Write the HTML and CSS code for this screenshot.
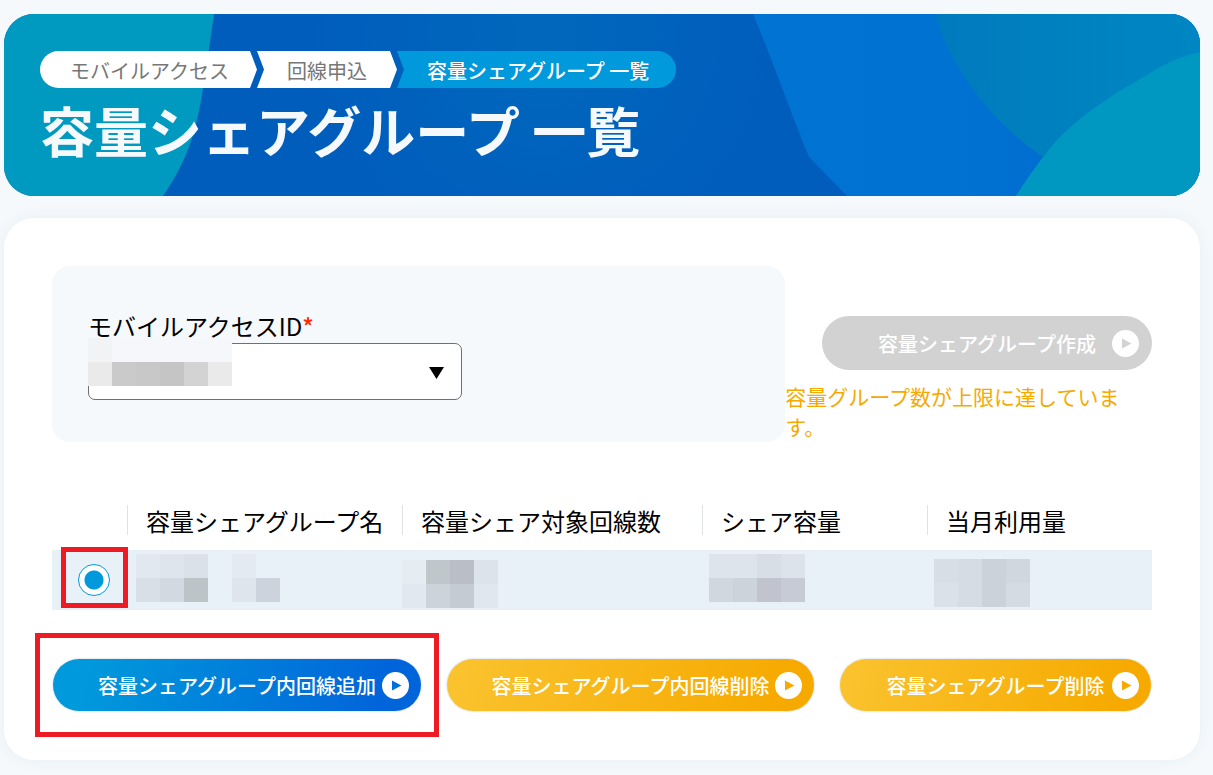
FILE: index.html
```html
<!DOCTYPE html>
<html lang="ja">
<head>
<meta charset="utf-8">
<meta name="viewport" content="width=device-width, initial-scale=1">
<title>容量シェアグループ 一覧</title>
<link rel="stylesheet" href="styles.css">
</head>
<body>
<div class="page">
  <header class="hero">
    <svg class="hero-art" viewBox="0 0 1196 182" preserveAspectRatio="none" aria-hidden="true">
      <defs>
        <radialGradient id="base" gradientUnits="userSpaceOnUse" cx="540" cy="20" r="230">
          <stop offset="0" stop-color="#0068bc"/><stop offset="1" stop-color="#005dbc"/>
        </radialGradient>
        <linearGradient id="sky" x1="0" y1="0" x2="1" y2="0">
          <stop offset="0" stop-color="#0074d3"/><stop offset="0.45" stop-color="#0072d2"/><stop offset="0.7" stop-color="#006dd0"/>
        </linearGradient>
        <linearGradient id="sea" x1="0" y1="0" x2="1" y2="0">
          <stop offset="0" stop-color="#007abf"/><stop offset="0.35" stop-color="#0080be"/><stop offset="1" stop-color="#0086c4"/>
        </linearGradient>
      </defs>
      <rect width="1196" height="182" fill="url(#base)"/>
      <path d="M0 0H210C206 28 203 50 199 74C193 115 184 146 159 182H0Z" fill="#0099c0"/>
      <path d="M749 0C768 45 783 88 802 136Q804 142 808 146L843 182H1196V0Z" fill="url(#sky)"/>
      <path d="M931 0C945 50 985 107 1039 143L1196 150V0Z" fill="url(#sea)"/>
      <path d="M1012 182C1027 158 1040 141 1053 126C1082 97 1108 81 1143 61C1158 51 1175 43 1196 38V182Z" fill="#0097c0"/>
    </svg>
    <nav class="crumbs" aria-label="パンくずリスト">
      <a class="crumb crumb-first" href="#">モバイルアクセス</a>
      <a class="crumb crumb-mid" href="#">回線申込</a>
      <span class="crumb crumb-last" aria-current="page">容量シェアグループ 一覧</span>
    </nav>
    <h1 class="title">容量シェアグループ 一覧</h1>
  </header>

  <main class="card">
    <div class="top">
      <section class="panel">
        <label class="label" for="access-id">モバイルアクセスID<span class="required">*</span></label>
        <div class="select-wrap">
          <select class="select" id="access-id"><option></option></select>
          <svg class="caret" viewBox="0 0 16 12" aria-hidden="true"><path d="M0 0H15L7.500 12Z"/></svg>
          <svg class="mask" viewBox="0 0 144 48" shape-rendering="crispEdges" aria-hidden="true">
            <path fill="#f6f7fa" d="M24 0h120v24H24z"/><path fill="#f2f3f5" d="M0 0h24v24H0z"/>
            <path fill="#eaeaea" d="M0 24h24v24H0zM120 24h24v24h-24z"/><path fill="#cacaca" d="M24 24h24v24H24z"/>
            <path fill="#c8c8c8" d="M48 24h24v24H48z"/><path fill="#c5c5c5" d="M72 24h24v24H72z"/><path fill="#d3d3d3" d="M96 24h24v24H96z"/>
          </svg>
        </div>
      </section>
      <section class="create">
        <button class="button button-create" type="button" disabled>容量シェアグループ作成
          <svg class="play" viewBox="0 0 27 27" aria-hidden="true"><circle cx="13.500" cy="13.500" r="13.500"/><path d="M10 8.500L19.500 13.500L10 18.500Z"/></svg>
        </button>
        <p class="notice">容量グループ数が上限に達しています。</p>
      </section>
    </div>

    <table class="groups">
      <colgroup><col class="col-pick"><col class="col-name"><col class="col-lines"><col class="col-size"><col class="col-size"></colgroup>
      <thead>
        <tr>
          <td></td>
          <th scope="col"><span class="head">容量シェアグループ名</span></th>
          <th scope="col"><span class="head">容量シェア対象回線数</span></th>
          <th scope="col"><span class="head">シェア容量</span></th>
          <th scope="col"><span class="head">当月利用量</span></th>
        </tr>
      </thead>
      <tbody>
        <tr class="row">
          <td class="pick"><input class="radio" type="radio" name="group" aria-label="グループを選択" checked><span class="mark mark-radio"></span></td>
          <td><svg class="mosaic" viewBox="0 0 200 60" shape-rendering="crispEdges" aria-hidden="true">
            <path fill="#e2e8ef" d="M9 4h24v24H9z"/><path fill="#dfe5ec" d="M33 4h24v24H33z"/><path fill="#dae1e8" d="M57 4h24v24H57z"/>
            <path fill="#d9dfe7" d="M9 28h24v24H9z"/><path fill="#d2d9e0" d="M33 28h24v24H33z"/><path fill="#bcc4c8" d="M57 28h24v24H57z"/>
            <path fill="#e4eaf1" d="M105 4h24v24h-24z"/><path fill="#dee5ed" d="M105 28h24v24h-24z"/><path fill="#ccd3dc" d="M129 28h24v24h-24z"/></svg></td>
          <td><svg class="mosaic" viewBox="0 0 200 60" shape-rendering="crispEdges" aria-hidden="true">
            <path fill="#e5ecf2" d="M0 10h24v24H0z"/><path fill="#bfc7ca" d="M24 10h24v24H24z"/><path fill="#b9bec7" d="M48 10h24v24H48z"/><path fill="#dce3eb" d="M72 10h24v24H72z"/>
            <path fill="#e1e8f0" d="M0 34h24v24H0z"/><path fill="#ccd3db" d="M24 34h24v24H24z"/><path fill="#c4cbd3" d="M48 34h24v24H48z"/><path fill="#e0e7ef" d="M72 34h24v24H72z"/></svg></td>
          <td><svg class="mosaic" viewBox="0 0 200 60" shape-rendering="crispEdges" aria-hidden="true">
            <path fill="#dde4ec" d="M7 4h48v24H7z"/><path fill="#d7dee6" d="M55 4h24v24H55z"/><path fill="#dce3eb" d="M79 4h24v24H79z"/>
            <path fill="#d0d7df" d="M7 28h24v24H7z"/><path fill="#ccd3da" d="M31 28h24v24H31z"/><path fill="#c1c4ce" d="M55 28h24v24H55z"/><path fill="#c7cbd5" d="M79 28h24v24H79z"/></svg></td>
          <td><svg class="mosaic" viewBox="0 0 200 60" shape-rendering="crispEdges" aria-hidden="true">
            <path fill="#d7dee5" d="M7 9h24v24H7z"/><path fill="#d5dce4" d="M31 9h24v48H31z"/><path fill="#cbd2da" d="M55 9h24v48H55z"/><path fill="#d0d7df" d="M79 9h24v24H79z"/>
            <path fill="#dae1e9" d="M7 33h24v24H7z"/><path fill="#d4dbe3" d="M79 33h24v24H79z"/></svg></td>
        </tr>
      </tbody>
    </table>

    <div class="actions">
      <div class="action">
        <button class="button button-add" type="button">容量シェアグループ内回線追加
          <svg class="play" viewBox="0 0 27 27" aria-hidden="true"><circle cx="13.500" cy="13.500" r="13.500"/><path d="M10 8.500L19.500 13.500L10 18.500Z"/></svg>
        </button>
        <span class="mark mark-add"></span>
      </div>
      <button class="button button-delete" type="button">容量シェアグループ内回線削除
        <svg class="play" viewBox="0 0 27 27" aria-hidden="true"><circle cx="13.500" cy="13.500" r="13.500"/><path d="M10 8.500L19.500 13.500L10 18.500Z"/></svg>
      </button>
      <button class="button button-delete" type="button">容量シェアグループ削除
        <svg class="play" viewBox="0 0 27 27" aria-hidden="true"><circle cx="13.500" cy="13.500" r="13.500"/><path d="M10 8.500L19.500 13.500L10 18.500Z"/></svg>
      </button>
    </div>
  </main>
</div>
</body>
</html>
```

FILE: styles.css
```css
*, *::before, *::after { box-sizing: border-box; }

body {
  margin: 0;
  background: #f5f9fc;
  color: #000;
  font-family: "Noto Sans CJK JP", sans-serif;
  font-size: 24px;
  line-height: 30px;
}

button, select, input { font: inherit; margin: 0; }

.page {
  display: flex;
  flex-direction: column;
  gap: 22px;
  padding: 14px 13px 15px 4px;
}

/* Header banner */
.hero {
  position: relative;
  overflow: hidden;
  border-radius: 30px;
  padding: 37px 36px 36px;
}
.hero-art { position: absolute; inset: 0; width: 100%; height: 100%; }
.crumbs { position: relative; display: flex; }
.crumb {
  height: 37px;
  padding: 0 30px;
  background: #fff;
  color: #777;
  font-size: 20px;
  line-height: 39px;
  white-space: nowrap;
  text-decoration: none;
}
.crumb-first {
  padding-right: 28px;
  border-radius: 19px 0 0 19px;
  clip-path: polygon(0 0, calc(100% - 7px) 0, 100% 50%, calc(100% - 7px) 100%, 0 100%);
}
.crumb-mid {
  clip-path: polygon(0 0, calc(100% - 7px) 0, 100% 50%, calc(100% - 7px) 100%, 0 100%, 7px 50%);
}
.crumb-last {
  padding-right: 27px;
  background: #0099dc;
  color: #fff;
  font-weight: 500;
  border-radius: 0 19px 19px 0;
  clip-path: polygon(0 0, 100% 0, 100% 100%, 0 100%, 7px 50%);
}
.title {
  position: relative;
  margin: 12px 0 0;
  color: #f5f9fc;
  font-size: 54px;
  font-weight: 700;
  line-height: 60px;
}

/* Content card */
.card {
  padding: 48px 48px 49px;
  background: #fff;
  border-radius: 30px;
  box-shadow: 0 0 16px rgba(0, 60, 110, 0.06);
}
.top { display: grid; grid-template-columns: 2fr 1fr; }
.panel {
  padding: 43px 36px 42px;
  background: #f5f9fc;
  border-radius: 18px;
}
.label { display: block; line-height: 34px; }
.required { color: #ff2a00; font-weight: 500; }
.select-wrap { position: relative; max-width: 374px; }
.select {
  display: block;
  width: 100%;
  height: 57px;
  padding: 0 40px 0 18px;
  appearance: none;
  background: #fff;
  border: 1px solid #707070;
  border-radius: 7px;
}
.caret { position: absolute; top: 24px; right: 17px; width: 16px; height: 12px; }
.mask { position: absolute; top: -5px; left: 0; width: 144px; height: 48px; }

.create { padding-top: 50px; }
.notice {
  margin: 11px 0 0;
  color: #f6aa00;
  font-size: 21px;
}

/* Buttons */
.button {
  position: relative;
  display: block;
  width: 100%;
  height: 52px;
  padding: 2px 0 0;
  border: 0;
  border-radius: 27px;
  color: #fff;
  font-size: 20px;
  font-weight: 500;
  white-space: nowrap;
  box-shadow: 0 0 2px rgba(0, 40, 120, 0.3);
}
.button-create {
  width: 90%;
  height: 54px;
  margin-left: auto;
  background: #d2d2d2;
  box-shadow: none;
  --accent: #d2d2d2;
}
.button-add { background: linear-gradient(105deg, #0099dc 10%, #0064da 90%); --accent: #0070dc; }
.button-delete { background: linear-gradient(105deg, #fac22d 5%, #f6aa00 90%); --accent: #f6aa00; }
.play {
  position: absolute;
  top: calc(50% - 13px);
  right: 12px;
  width: 27px;
  height: 27px;
}
.button-create .play { right: 13px; }
.play circle { fill: #fff; }
.play path { fill: var(--accent); }

/* Group table */
.groups {
  width: 100%;
  margin-top: 48px;
  table-layout: fixed;
  border-collapse: collapse;
}
.groups td { padding: 0; }
.groups th { height: 60px; padding: 0; font-weight: 400; text-align: left; }
.col-pick { width: 75px; }
.col-name { width: 25%; }
.col-lines { width: 300px; }
.head {
  display: block;
  height: 30px;
  padding-left: 18px;
  border-left: 1px solid #dfe2e5;
  line-height: 32px;
  white-space: nowrap;
}
.row { background: #e9f1f8; }
.pick { position: relative; }
.radio {
  display: block;
  width: 32px;
  height: 32px;
  margin-left: 26px;
  appearance: none;
  border: 1px solid #0099dc;
  border-radius: 50%;
  background: radial-gradient(circle, #0099dc 9px, #fff 10px);
}
.mosaic { display: block; width: 200px; height: 60px; }

/* Actions */
.actions {
  display: grid;
  grid-template-columns: 368fr 367fr 311fr;
  gap: 26px;
  padding: 0 1px;
  margin-top: 49px;
}
.action { position: relative; }

/* Red callout frames */
.mark { position: absolute; border: 5px solid #ed1c24; pointer-events: none; }
.mark-radio { inset: -3px -1px 2px 9px; }
.mark-add { inset: -26px -18px; }
```
